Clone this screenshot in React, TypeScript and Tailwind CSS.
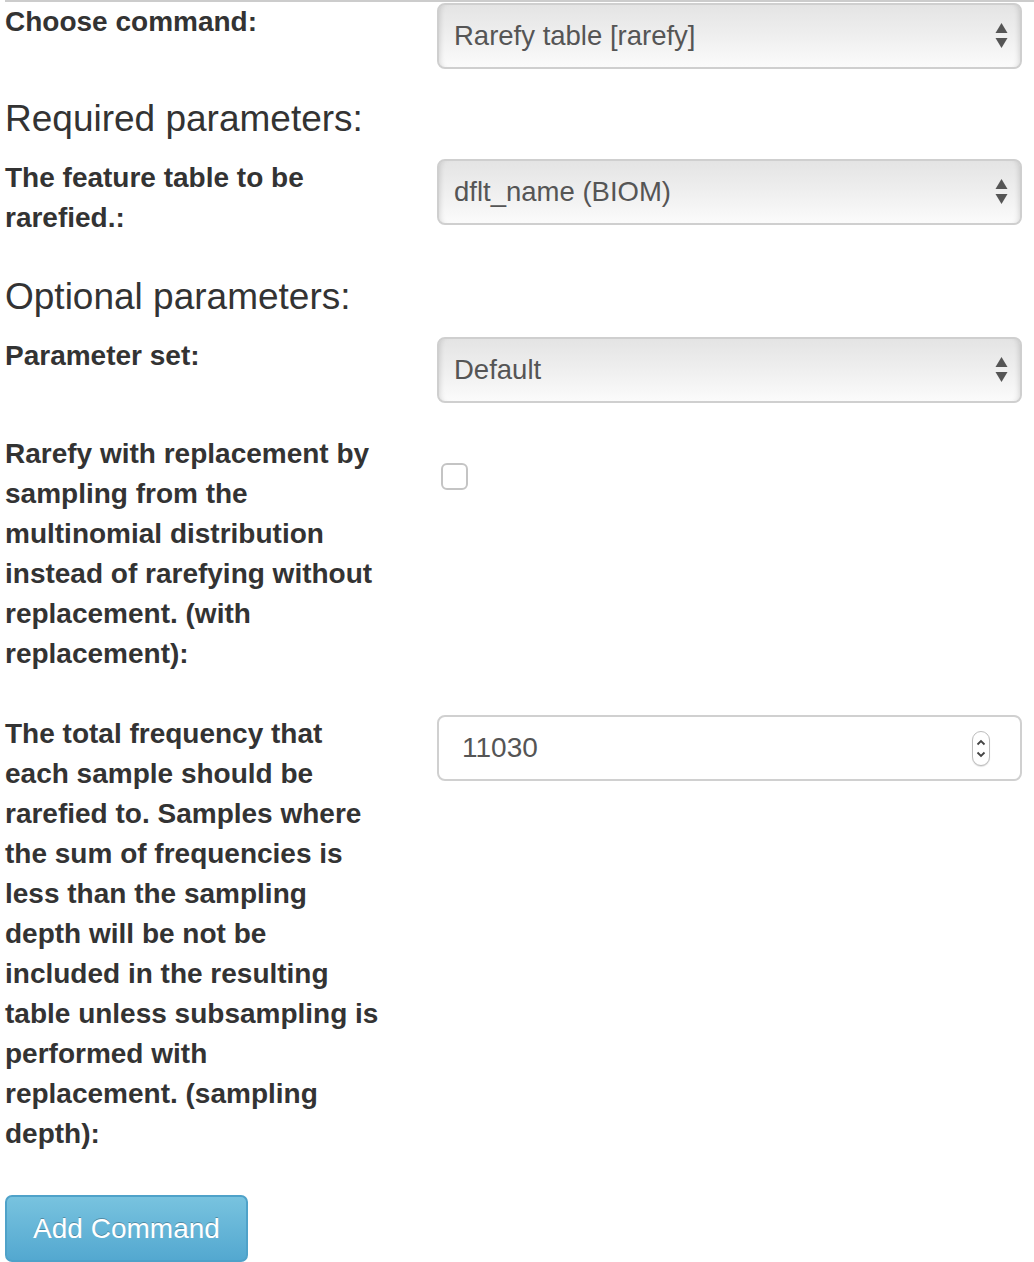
import React from 'react';

const font = { fontFamily: '"Liberation Sans", Arial, Helvetica, sans-serif' };

function SelectArrows() {
  return (
    <svg width="13" height="26" viewBox="0 0 13 26" className="shrink-0">
      <polygon points="6.5,0 12.5,10 0.5,10" fill="#555" />
      <polygon points="0.5,15 12.5,15 6.5,25" fill="#555" />
    </svg>
  );
}

function FakeSelect({ value }: { value: string }) {
  return (
    <div className="mt-[1px] h-[66px] w-[585px] rounded-[8px] border-2 border-[#cfcfcf] bg-gradient-to-b from-[#e4e4e4] via-[#efefef] to-[#fbfbfb] shadow-[inset_6px_0_6px_-6px_rgba(0,0,0,0.18),inset_-6px_0_6px_-6px_rgba(0,0,0,0.18)] flex items-center justify-between pl-[15px] pr-[12px]">
      <span className="text-[27.5px] text-[#555] leading-none">{value}</span>
      <SelectArrows />
    </div>
  );
}

function NumberInput({ value }: { value: string }) {
  return (
    <div className="mt-[1px] h-[66px] w-[585px] rounded-[8px] border-2 border-[#d0d0d0] bg-white flex items-center justify-between pl-[23px] pr-[30px]">
      <span className="text-[28px] text-[#555] leading-none">{value}</span>
      <div className="w-[18px] h-[35px] rounded-full border border-[#bdbdbd] bg-white shadow-[0_1px_1px_rgba(0,0,0,0.12)] flex flex-col items-center justify-center gap-[5px]">
        <svg width="10" height="7" viewBox="0 0 10 7">
          <polyline points="1.5,5.5 5,2 8.5,5.5" fill="none" stroke="#444" strokeWidth="1.8" />
        </svg>
        <svg width="10" height="7" viewBox="0 0 10 7">
          <polyline points="1.5,1.5 5,5 8.5,1.5" fill="none" stroke="#444" strokeWidth="1.8" />
        </svg>
      </div>
    </div>
  );
}

function Row({ label, children, className = '' }: { label: string; children: React.ReactNode; className?: string }) {
  return (
    <div className={`flex items-start ${className}`}>
      <div className="w-[378px] pl-[5px] shrink-0 box-content text-[28px] leading-[40px] font-bold text-[#333]">{label}</div>
      <div className="ml-[54px]">{children}</div>
    </div>
  );
}

export default function App() {
  return (
    <div className="min-h-screen bg-white" style={font}>
      <div className="h-[2px] bg-[#cccccc] ml-[5px]" />

      <Row label="Choose command:">
        <FakeSelect value="Rarefy table [rarefy]" />
      </Row>

      <h3 className="mt-[30px] pl-[5px] text-[37px] leading-[40px] font-normal text-[#333]">Required parameters:</h3>

      <Row label="The feature table to be rarefied.:" className="mt-[19px]">
        <FakeSelect value="dflt_name (BIOM)" />
      </Row>

      <h3 className="mt-[39px] pl-[5px] text-[37px] leading-[40px] font-normal text-[#333]">Optional parameters:</h3>

      <Row label="Parameter set:" className="mt-[19px]">
        <FakeSelect value="Default" />
      </Row>

      <Row
        label="Rarefy with replacement by sampling from the multinomial distribution instead of rarefying without replacement. (with replacement):"
        className="mt-[31px]"
      >
        <div className="mt-[29px] ml-[4px] w-[27px] h-[27px] rounded-[6px] border-2 border-[#c4c4c4] bg-white" />
      </Row>

      <Row
        label="The total frequency that each sample should be rarefied to. Samples where the sum of frequencies is less than the sampling depth will be not be included in the resulting table unless subsampling is performed with replacement. (sampling depth):"
        className="mt-[40px]"
      >
        <NumberInput value="11030" />
      </Row>

      <div className="mt-[41px] pl-[5px]">
        <button className="h-[67px] w-[243px] rounded-[7px] border-2 border-[#4fa2c9] bg-gradient-to-b from-[#78c3df] to-[#53a8d0] text-white text-[28px] leading-none [text-shadow:0_-1px_0_rgba(0,0,0,0.25)]">
          Add Command
        </button>
      </div>
    </div>
  );
}
